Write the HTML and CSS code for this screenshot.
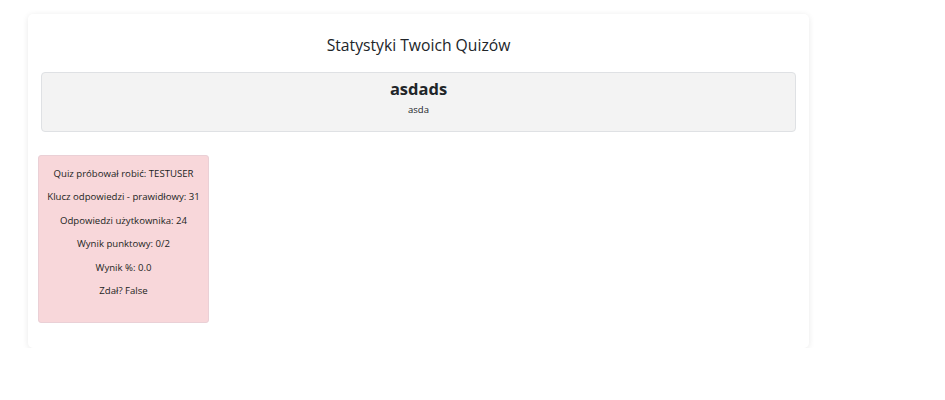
FILE: index.html
```html
<!DOCTYPE html>
<html lang="pl">
<head>
<meta charset="utf-8">
<title>Statystyki Twoich Quizów</title>
<link rel="stylesheet" href="styles.css">
</head>
<body>
<div class="card">
  <h2 class="title">Statystyki Twoich Quizów</h2>
  <div class="quiz-head">
    <h3 class="quiz-name">asdads</h3>
    <p class="quiz-desc">asda</p>
  </div>
  <div class="attempts">
    <div class="attempt failed">
      <p>Quiz próbował robić: TESTUSER</p>
      <p>Klucz odpowiedzi - prawidłowy: 31</p>
      <p>Odpowiedzi użytkownika: 24</p>
      <p>Wynik punktowy: 0/2</p>
      <p>Wynik %: 0.0</p>
      <p>Zdał? False</p>
    </div>
  </div>
</div>
</body>
</html>
```
FILE: styles.css
```css
html, body {
  margin: 0;
  padding: 0;
  background: #ffffff;
}
body {
  font-family: "Open Sans", "Noto Sans", sans-serif;
  color: #212529;
  padding: 14px 0 0 28px;
}
.card {
  width: 781px;
  box-sizing: border-box;
  background: #fff;
  border-radius: 5px;
  box-shadow: 0 1px 6px rgba(0,0,0,0.09);
  padding: 20px 13px 25px 10px;
}
.title {
  margin: 0;
  font-weight: 400;
  font-size: 15.7px;
  line-height: 22px;
  text-align: center;
  padding-left: 3px;
}
.quiz-head {
  margin: 16px 0 0 3px;
  height: 60px;
  box-sizing: border-box;
  background: #f3f3f3;
  border: 1px solid #dfe1e4;
  border-radius: 4px;
  text-align: center;
  padding-top: 5px;
}
.quiz-name {
  margin: 0;
  font-size: 16.5px;
  font-weight: 700;
  line-height: 22px;
}
.quiz-desc {
  margin: 0;
  font-size: 9.5px;
  line-height: 20px;
}
.attempts {
  display: flex;
  margin-top: 23px;
}
.attempt {
  width: 171px;
  height: 168px;
  box-sizing: border-box;
  border-radius: 3px;
  padding: 11px 4px 0;
  text-align: center;
}
.attempt.failed {
  background: #f8d7da;
  border: 1px solid #ead0d6;
}
.attempt p {
  margin: 0 0 9.4px;
  font-size: 9.6px;
  line-height: 14px;
  white-space: nowrap;
  color: #1c1f23;
}
```
